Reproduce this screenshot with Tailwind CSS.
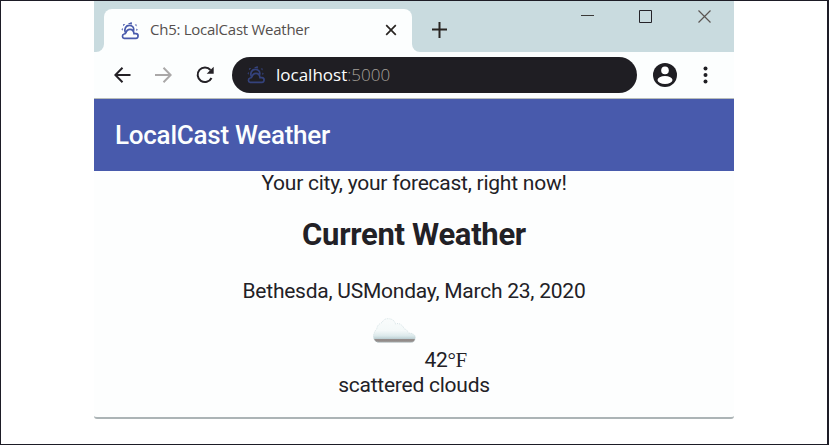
<!DOCTYPE html>
<html lang="en"><head><meta charset="utf-8"><title>LocalCast Weather</title>
<script src="https://cdn.jsdelivr.net/npm/@tailwindcss/browser@4"></script></head>
<body class="bg-white">
<svg class="hidden"><symbol id="partly" viewBox="0 0 20 18"><g fill="none" stroke="currentColor" stroke-width="1.700"><path d="M4.200 16.300h11.300a2.300 2.300 0 0 0 .5-4.600h-2c-.2-2.600-1.500-4.400-4-4.400-2.300 0-3.500 1.400-4.200 3.600-.2.800-.8 1-1.600 1.100a2.200 2.200 0 0 0 0 4.300Z"/><path d="M5.300 10.500C3.900 6.500 6 3.400 9.300 3.400c3 0 4.900 2 4.500 5.300"/></g><g fill="currentColor"><path d="m7.800 1.700 3.800-1.600.5 2.300ZM3 2.200l2.300-.2-2 2.200ZM14.700 2.400l2 .2-.3 2ZM1.400 7.200l1.400-1.200v2.800ZM16.200 6.600l1.700 1.200-1.500 1.300Z"/></g></symbol></svg>
<div class="flex h-[445px] w-[829px] border-t border-r-2 border-b border-l border-[#1d1c26] pl-[93px]">
<main class="flex h-[418px] w-[640px] flex-col overflow-hidden rounded-b-[3px] border-b-2 border-[#acb4b6] bg-[#fdfefe]">
  <div class="flex h-[51px] shrink-0 bg-[#c9dbdf] pt-2">
    <div class="flex w-[10px] shrink-0 bg-[#fcfefe]"><div class="h-full w-full rounded-br-[8px] bg-[#c9dbdf]"></div></div>
    <div class="flex w-[308px] shrink-0 bg-[#c9dbdf]"><div class="flex h-[43px] w-full items-center rounded-t-[8px] bg-[#fcfefe] pl-4 font-['Open_Sans',sans-serif]">
      <svg class="h-[18px] w-5 shrink-0 text-[#485aac]"><use href="#partly"/></svg>
      <span class="-mt-0.5 ml-[10px] w-[235px] shrink-0 text-[15px] tracking-[-0.26px] text-[#55504e]">Ch5: LocalCast Weather</span>
      <svg class="-mt-0.5 h-3 w-3" viewBox="0 0 12 12" stroke="#292522" stroke-width="1.700"><path d="m1.200 1.200 9.600 9.600M10.800 1.200l-9.600 9.600"/></svg>
    </div></div>
    <div class="flex w-[322px] bg-[#fcfefe]"><div class="flex w-full rounded-bl-[8px] bg-[#c9dbdf] pl-5">
      <svg class="mt-[13px] h-4 w-4" viewBox="0 0 16 16" stroke="#292522" stroke-width="2"><path d="M7.500 0v16M0 7.500h15"/></svg>
      <svg class="mt-[6px] ml-[133px] h-[2px] w-[13px]"><path d="M0 .5h13" stroke="#3b3938"/></svg>
      <svg class="mt-px ml-[45px] h-[14px] w-[14px]" viewBox="0 0 14 14" fill="none" stroke="#252329"><path d="M.5.5h12v12H.5z"/></svg>
      <svg class="mt-px ml-[45px] h-[14px] w-[14px]" viewBox="0 0 14 14" stroke="#5b5552" stroke-width="1.200"><path d="m.5.5 12 12M12.500.5l-12 12"/></svg>
    </div></div>
  </div>
  <div class="flex h-[47px] shrink-0 items-center border-b border-[#b8bdba] bg-[#fcfefe] pl-5">
    <svg class="-mt-px h-4 w-[17px]" viewBox="0 0 17 16" fill="none" stroke="#242126" stroke-width="2"><path d="M16.500 8h-15M8.500.8 1.300 8l7.200 7.200"/></svg>
    <svg class="-mt-px ml-6 h-4 w-[17px]" viewBox="0 0 17 16" fill="none" stroke="#aaa8a8" stroke-width="2"><path d="M0 8h15.500M8.500.8 15.700 8l-7.200 7.200"/></svg>
    <svg class="-mt-px ml-6 h-[18px] w-[18px]" viewBox="0 0 18 18" fill="none" stroke="#242126" stroke-width="2"><path d="M15.500 12A7.300 7.300 0 1 1 14.500 4"/><path d="M17.700.8v7h-7z" fill="#242126" stroke="none"/></svg>
    <div class="ml-[18px] flex h-9 w-[405px] items-center rounded-full bg-[#1f1e23] pl-[14px] font-['Open_Sans',sans-serif] text-[17px]">
      <svg class="h-[18px] w-5 text-[#34427c]"><use href="#partly"/></svg>
      <span class="ml-[10px] text-[#fcfefe]">localhost<span class="font-light text-[#a6a09a]">:5000</span></span>
    </div>
    <svg class="ml-4 h-6 w-6" viewBox="0 0 24 24"><circle cx="12" cy="12" r="12" fill="#1f1e23"/><circle cx="12" cy="7.400" r="3.800" fill="#fff"/><ellipse cx="12" cy="17" rx="7.500" ry="4" fill="#fff"/></svg>
    <svg class="ml-[26px] h-[18px] w-[5px]" viewBox="0 0 5 18" fill="#1f1e23"><circle cx="2.500" cy="2.500" r="2"/><circle cx="2.500" cy="9" r="2"/><circle cx="2.500" cy="15.500" r="2"/></svg>
  </div>
  <header class="flex h-[72px] shrink-0 items-center bg-[#485aac] pl-[21px] font-[Roboto,sans-serif] text-[26px] font-medium tracking-[-0.25px] text-[#fcfefe]">LocalCast Weather</header>
  <section class="flex flex-col items-center font-[Roboto,sans-serif] text-[21px] leading-[25px] tracking-[-0.24px] text-[#222126]">
    <p>Your city, your forecast, right now!</p>
    <h1 class="mt-[21px] text-[31px] leading-[36px] font-bold tracking-[-0.3px]">Current Weather</h1>
    <p class="mt-[26px]">Bethesda, USMonday, March 23, 2020</p>
    <div class="mt-[14px] mr-[40px] flex h-[27px] w-[43px]">
      <svg class="h-[26px] w-[43px]" viewBox="0 0 43 26"><defs><linearGradient id="cloud" x2="0" y2="1"><stop stop-color="#f9fcfc"/><stop offset=".5" stop-color="#f4f9f9"/><stop offset=".72" stop-color="#dce9eb"/><stop offset=".84" stop-color="#bdd0d4"/><stop offset=".88" stop-color="#8c817e"/><stop offset="1" stop-color="#a1a4a4"/></linearGradient></defs><path d="M5 24.500C1 23.500-.5 19.500 1 15.500c.7-2 1.500-3.500 2.800-4.500C4 7 7 5.500 9 4.500 10.500 1.500 12.500.7 15 .7c4 0 6.500 1.800 7.500 5.300 4-1.500 7 1 8.800 5 2 0 3.500 2 4 4 4 0 7 1.500 7 4.500 0 3-1.500 5-4.500 5Z" fill="url(#cloud)" stroke="#c5d7db" stroke-width=".7" stroke-dasharray="1 1"/></svg>
    </div>
    <p class="mt-[3px] ml-[63px] flex h-[25px]">42<span class="font-['Liberation_Serif',serif] tracking-[-0.5px]">°F</span></p>
    <p>scattered clouds</p>
  </section>
</main></div>
</body></html>
